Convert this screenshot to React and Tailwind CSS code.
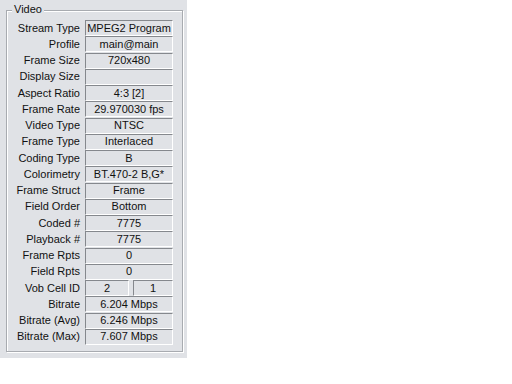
const rows = [
  ['Stream Type', 'MPEG2 Program'],
  ['Profile', 'main@main'],
  ['Frame Size', '720x480'],
  ['Display Size', ''],
  ['Aspect Ratio', '4:3 [2]'],
  ['Frame Rate', '29.970030 fps'],
  ['Video Type', 'NTSC'],
  ['Frame Type', 'Interlaced'],
  ['Coding Type', 'B'],
  ['Colorimetry', 'BT.470-2 B,G*'],
  ['Frame Struct', 'Frame'],
  ['Field Order', 'Bottom'],
  ['Coded #', '7775'],
  ['Playback #', '7775'],
  ['Frame Rpts', '0'],
  ['Field Rpts', '0'],
  ['Vob Cell ID', ['2', '1']],
  ['Bitrate', '6.204 Mbps'],
  ['Bitrate (Avg)', '6.246 Mbps'],
  ['Bitrate (Max)', '7.607 Mbps'],
]

function Field({ children, className = '' }) {
  return (
    <div className={`h-[16px] border border-t-[#85888d] border-l-[#85888d] border-b-white border-r-white flex items-center justify-center leading-none whitespace-nowrap overflow-hidden ${className}`}>
      {children}
    </div>
  )
}

export default function App() {
  return (
    <div className="w-[512px] h-[384px] bg-white" style={{ fontFamily: '"Liberation Sans", Arial, sans-serif' }}>
      <div className="w-[187px] h-[358px] bg-[#e0e2e6] pt-[10px] pl-[6px] pr-[4px] pb-[6px] text-[11px] text-[#111]">
        <div className="relative h-full border border-[#a8abb0] shadow-[inset_1px_1px_0_#fff,1px_1px_0_#fff]">
          <span className="absolute -top-[7px] left-[5px] bg-[#e0e2e6] px-[2px] leading-none">Video</span>
          <div className="pt-[9px] flex flex-col">
            {rows.map(([label, value]) => (
              <div key={label} className="h-[16.25px] flex items-center">
                <div className="w-[78px] text-right pr-[5px] leading-none whitespace-nowrap">{label}</div>
                {Array.isArray(value) ? (
                  <div className="w-[88px] flex gap-[4px]">
                    <Field className="w-[44px]">{value[0]}</Field>
                    <Field className="flex-1">{value[1]}</Field>
                  </div>
                ) : (
                  <Field className="w-[88px]">{value}</Field>
                )}
              </div>
            ))}
          </div>
        </div>
      </div>
    </div>
  )
}
